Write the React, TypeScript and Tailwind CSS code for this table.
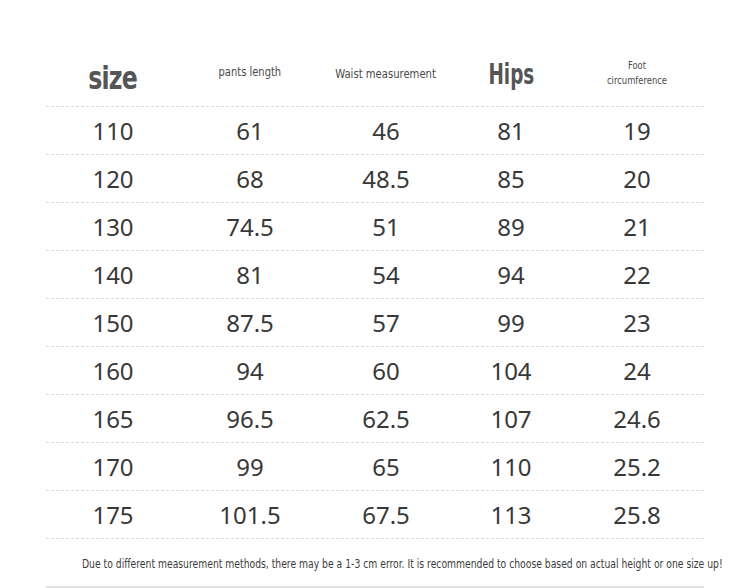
const rows = [
  ["110", "61", "46", "81", "19"],
  ["120", "68", "48.5", "85", "20"],
  ["130", "74.5", "51", "89", "21"],
  ["140", "81", "54", "94", "22"],
  ["150", "87.5", "57", "99", "23"],
  ["160", "94", "60", "104", "24"],
  ["165", "96.5", "62.5", "107", "24.6"],
  ["170", "99", "65", "110", "25.2"],
  ["175", "101.5", "67.5", "113", "25.8"],
];

const cols = "grid grid-cols-[134px_140px_132px_118px_134px]";
const cond = { fontFamily: '"DejaVu Sans Condensed", "DejaVu Sans", sans-serif' };

export default function App() {
  return (
    <div className="h-[588px] w-[750px] overflow-hidden bg-white">
      <div className="ml-[46px] w-[658px]">
        {/* Header */}
        <div className={`${cols} h-[106px] items-center pt-[44px] text-[#4a4a4a]`} style={cond}>
          <div className="flex translate-y-[3px] justify-center">
            <span className="text-[32px] font-bold tracking-[-1px] text-[#555] [transform:scaleX(0.82)]">size</span>
          </div>
          <div className="flex -translate-y-[3px] justify-center">
            <span className="text-[13px] [transform:scaleX(0.85)]">pants length</span>
          </div>
          <div className="flex -translate-y-[1px] justify-center">
            <span className="whitespace-nowrap text-[13px] [transform:scaleX(0.86)]">Waist measurement</span>
          </div>
          <div className="flex justify-center">
            <span className="text-[28px] font-bold text-[#555] [transform:scaleX(0.73)]">Hips</span>
          </div>
          <div className="flex -translate-y-[2px] flex-col items-center text-[11px] leading-[15px] [transform:scaleX(0.85)]">
            <span>Foot</span>
            <span>circumference</span>
          </div>
        </div>

        {/* Rows */}
        {rows.map((r) => (
          <div
            key={r[0]}
            className={`${cols} h-[48px] items-center border-t border-dashed border-[#dcdcdc] text-[24px] text-[#383838]`}
            style={{ fontFamily: '"Noto Sans", sans-serif' }}
          >
            {r.map((v, i) => (
              <div key={i} className="text-center">
                {v}
              </div>
            ))}
          </div>
        ))}

        {/* Note */}
        <div className="relative h-[50px] border-t border-b-2 border-dashed border-t-[#dcdcdc] border-b-[#e2e2e2] [border-bottom-style:solid]">
          <div
            className="absolute left-[36px] top-[15px] origin-left whitespace-nowrap text-[13px] text-[#3c3c3c] [transform:scaleX(0.79)]"
            style={cond}
          >
            Due to different measurement methods, there may be a 1-3 cm error. It is recommended to choose based on actual height or one size up!
          </div>
        </div>
      </div>
    </div>
  );
}
